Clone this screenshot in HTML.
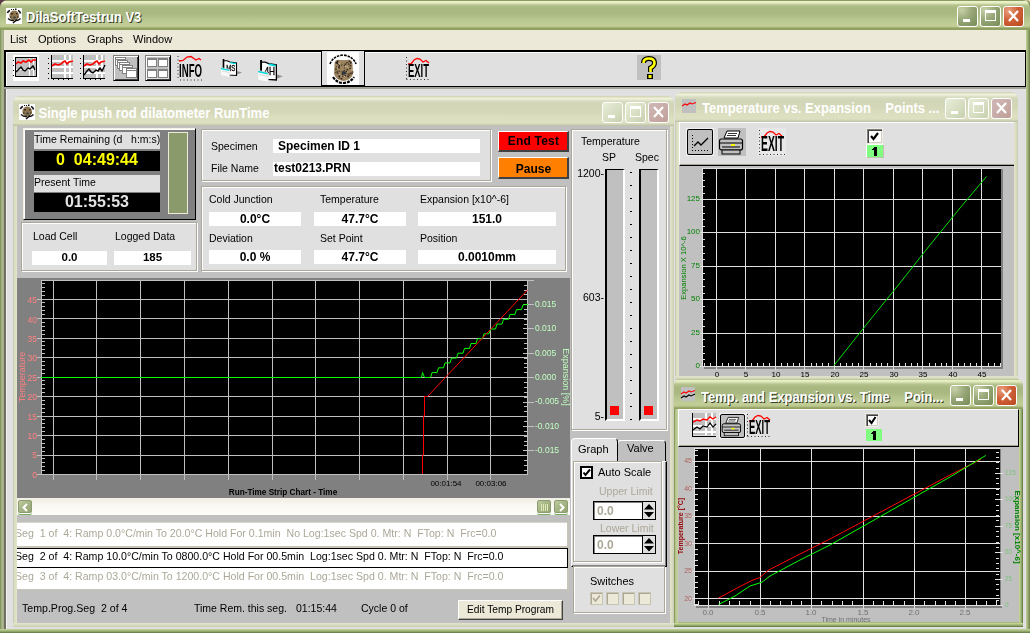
<!DOCTYPE html><html><head><meta charset="utf-8"><style>
*{margin:0;padding:0;box-sizing:border-box}
html,body{width:1030px;height:633px;overflow:hidden;background:linear-gradient(90deg,#5a3848 0,#5a3848 50%,#f8d4b4 50%)}
body{position:relative;font-family:"Liberation Sans",sans-serif;color:#000}
div{position:absolute}
.t{white-space:pre;will-change:transform}
svg{position:absolute;overflow:visible;will-change:transform}
</style></head><body><div style="left:0px;top:0px;width:1030px;height:633px;background:linear-gradient(90deg,#7a9060 0,#8ca068 1px,#b0c088 2px,#a8ac90 3px,#a8ac90 4px);border-radius:8px 8px 0 0"></div>
<div style="left:1026px;top:0px;width:4px;height:633px;background:linear-gradient(90deg,#c4d098 0,#b0c088 1px,#8ca068 2.5px,#6a8048 4px);border-radius:0 8px 0 0"></div>
<div style="left:0px;top:629px;width:1030px;height:4px;background:linear-gradient(180deg,#c8d498 0,#a8bc80 1.5px,#80985a 3px,#5a7040 4px)"></div>
<div style="left:0px;top:0px;width:1030px;height:30px;border-radius:8px 8px 0 0;background:linear-gradient(180deg,#8a9a60 0,#8a9a60 1px,#eef4cc 1px,#e4ecc0 3px,#b8c490 5px,#a8b880 8px,#aab882 14px,#b8c690 20px,#c2ce96 25px,#bcc890 27px,#90a060 28px,#90a060 30px)"></div>
<svg style="left:6px;top:8px" width="16" height="16" viewBox="0 0 16 16"><rect width="16" height="16" fill="#fff"/><path d="M1.5 5 Q2 3 4 2.5" stroke="#111" stroke-width="1.6" fill="none"/><path d="M12 2.5 Q14 3 14.5 5.5" stroke="#111" stroke-width="1.6" fill="none"/><rect x="5" y="1" width="1" height="1" fill="#111"/><rect x="7" y="1" width="1" height="1" fill="#111"/><rect x="9" y="0.5" width="1.5" height="1.5" fill="#111"/><ellipse cx="8.2" cy="7.5" rx="4.8" ry="5" fill="#8c7450"/><rect x="5" y="5" width="2" height="1.5" fill="#3a2a18"/><rect x="10" y="5" width="1.5" height="1.5" fill="#3a2a18"/><rect x="4" y="8" width="1.5" height="2" fill="#5a4a30"/><rect x="11" y="8" width="1.5" height="2" fill="#5a4a30"/><ellipse cx="8.5" cy="9.5" rx="1.3" ry="1" fill="#303840"/><path d="M2 10.5 Q5 13 8 12.5 M9 12.5 Q12 13 14.5 10.5" stroke="#111" stroke-width="1.5" fill="none"/><path d="M7 15 L11 11.5" stroke="#111" stroke-width="1.5"/></svg>
<div class="t" style="left:26px;top:11.00px;font-size:13px;line-height:13px;font-weight:bold;color:#fff;text-shadow:1px 1px 0 #38402a;transform:scaleY(1.1);transform-origin:0 11px;will-change:auto">DilaSoftTestrun V3</div>
<div style="left:957px;top:6px;width:21px;height:21px;border:1px solid #fff;border-radius:3px;background:radial-gradient(circle at 20% 15%,#c8d0a8 0,#98a878 45%,#788a58 100%)">
<div style="left:5px;top:12px;width:7px;height:3px;background:#fff"></div>
</div>
<div style="left:980px;top:6px;width:21px;height:21px;border:1px solid #fff;border-radius:3px;background:radial-gradient(circle at 20% 15%,#c8d0a8 0,#98a878 45%,#788a58 100%)">
<div style="left:4px;top:3px;width:11px;height:11px;border:1px solid #fff;border-top-width:3px"></div>
</div>
<div style="left:1003px;top:6px;width:21px;height:21px;border:1px solid #fff;border-radius:3px;background:radial-gradient(circle at 25% 20%,#e8a080 0,#d06038 45%,#b84820 100%)">
<svg style="left:0;top:0" width="19" height="19"><path d="M5 4 L14 14 M14 4 L5 14" stroke="#fff" stroke-width="2.2"/></svg>
</div>
<div style="left:4px;top:30px;width:1022px;height:20px;background:#ece9d8"></div>
<div class="t" style="left:9.5px;top:33.69px;font-size:11px;line-height:11px;">List</div>
<div class="t" style="left:37.5px;top:33.69px;font-size:11px;line-height:11px;">Options</div>
<div class="t" style="left:86.5px;top:33.69px;font-size:11px;line-height:11px;">Graphs</div>
<div class="t" style="left:133px;top:33.69px;font-size:11px;line-height:11px;">Window</div>
<div style="left:4px;top:50px;width:1022px;height:37px;background:#e0e0e0;border-top:2px solid #000;border-left:2px solid #000;border-right:1px solid #000;border-bottom:1px solid #000;box-shadow:inset 1px 1px 0 #fff"></div>
<div style="left:4px;top:87px;width:1021px;height:2px;background:#a4a498"></div>
<div style="left:4px;top:89px;width:1022px;height:540px;background:#e0e0e0;border-left:2px solid #706e60;box-shadow:inset 1px 0 0 #f4f4f4"></div>
<svg style="left:13px;top:55px" width="26" height="26" shape-rendering="crispEdges"><rect width="26" height="26" fill="#fff"/><rect x="2" y="2" width="22" height="20" fill="#000"/><rect x="3" y="3" width="20" height="18" fill="#c0c0c0"/><rect x="3" y="14" width="20" height="1" fill="#fff"/><rect x="16" y="3" width="1" height="18" fill="#fff"/><rect x="20" y="3" width="1" height="18" fill="#fff"/><path d="M3 9 L5 7 L8 8 L10 6 L13 7 L16 5 L18 7 L20 5 L23 5" stroke="#f00" stroke-width="1.6" fill="none" shape-rendering="auto"/><path d="M3 17 L6 14 L8 12 L10 15 L12 16 L15 13 L17 14 L20 11 L22 15" stroke="#000" stroke-width="1.4" fill="none" shape-rendering="auto"/><rect x="0" y="5" width="1" height="1" fill="#000"/><rect x="0" y="10" width="1" height="1" fill="#000"/><rect x="0" y="15" width="1" height="1" fill="#000"/><rect x="0" y="20" width="1" height="1" fill="#000"/></svg>
<svg style="left:48px;top:55px" width="26" height="26" shape-rendering="crispEdges"><rect x="3" y="0" width="22" height="23" fill="#c0c0c0"/><rect x="3" y="5" width="22" height="2" fill="#fff"/><rect x="3" y="11" width="22" height="2" fill="#fff"/><rect x="3" y="17" width="22" height="2" fill="#fff"/><rect x="16" y="0" width="2" height="23" fill="#fff"/><rect x="21" y="0" width="2" height="23" fill="#fff"/><rect x="3" y="0" width="1" height="24" fill="#000"/><rect x="3" y="23" width="22" height="1" fill="#000"/><rect x="0" y="3" width="1" height="1" fill="#000"/><rect x="0" y="8" width="1" height="1" fill="#000"/><rect x="0" y="13" width="1" height="1" fill="#000"/><rect x="0" y="18" width="1" height="1" fill="#000"/><rect x="0" y="23" width="1" height="1" fill="#000"/><rect x="5" y="24" width="1" height="1" fill="#000"/><rect x="10" y="24" width="1" height="1" fill="#000"/><rect x="15" y="24" width="1" height="1" fill="#000"/><rect x="20" y="24" width="1" height="1" fill="#000"/><path d="M4 11 L7 9 L10 10 L13 9 L15 7 L17 6 L19 9 L21 7 L25 6" stroke="#f00" stroke-width="1.6" fill="none" shape-rendering="auto"/></svg>
<svg style="left:80px;top:55px" width="26" height="26" shape-rendering="crispEdges"><rect x="3" y="0" width="22" height="23" fill="#c0c0c0"/><rect x="3" y="5" width="22" height="2" fill="#fff"/><rect x="3" y="11" width="22" height="2" fill="#fff"/><rect x="3" y="17" width="22" height="2" fill="#fff"/><rect x="16" y="0" width="2" height="23" fill="#fff"/><rect x="21" y="0" width="2" height="23" fill="#fff"/><rect x="3" y="0" width="1" height="24" fill="#000"/><rect x="3" y="23" width="22" height="1" fill="#000"/><rect x="0" y="3" width="1" height="1" fill="#000"/><rect x="0" y="8" width="1" height="1" fill="#000"/><rect x="0" y="13" width="1" height="1" fill="#000"/><rect x="0" y="18" width="1" height="1" fill="#000"/><rect x="0" y="23" width="1" height="1" fill="#000"/><rect x="5" y="24" width="1" height="1" fill="#000"/><rect x="10" y="24" width="1" height="1" fill="#000"/><rect x="15" y="24" width="1" height="1" fill="#000"/><rect x="20" y="24" width="1" height="1" fill="#000"/><path d="M4 11 L7 9 L10 10 L13 9 L15 7 L17 6 L19 9 L21 7 L25 6" stroke="#f00" stroke-width="1.6" fill="none" shape-rendering="auto"/><path d="M4 20 L7 16 L9 14 L11 17 L13 18 L16 15 L18 16 L20 13 L22 16 L25 10" stroke="#000" stroke-width="1.4" fill="none" shape-rendering="auto"/></svg>
<div style="left:113px;top:55px;width:26px;height:26px;background:#c0c0c0;border-top:1px solid #808080;border-left:1px solid #808080;border-right:1px solid #000;border-bottom:1px solid #000;box-shadow:inset 1px 1px 0 #fff, inset -1px -1px 0 #404040"></div>
<svg style="left:113px;top:55px" width="26" height="26" shape-rendering="crispEdges"><rect x="2.5" y="2.5" width="10" height="8" fill="#fff" stroke="#808080"/><rect x="3.0" y="4.0" width="9" height="1" fill="#808080"/><rect x="4.5" y="5" width="10" height="8" fill="#fff" stroke="#808080"/><rect x="5.0" y="6.5" width="9" height="1" fill="#808080"/><rect x="6" y="7" width="10" height="8" fill="#fff" stroke="#808080"/><rect x="6.5" y="8.5" width="9" height="1" fill="#808080"/><rect x="9" y="10" width="10" height="8" fill="#fff" stroke="#808080"/><rect x="9.5" y="11.5" width="9" height="1" fill="#808080"/><rect x="13.5" y="13.5" width="10" height="9" fill="#fff" stroke="#808080"/><rect x="14.0" y="15.0" width="9" height="1" fill="#808080"/></svg>
<div style="left:145px;top:55px;width:26px;height:26px;background:#e0e0e0;border-top:1px solid #808080;border-left:1px solid #808080;border-right:1px solid #000;border-bottom:1px solid #000;box-shadow:inset 1px 1px 0 #fff, inset -1px -1px 0 #404040"></div>
<svg style="left:145px;top:55px" width="26" height="26" shape-rendering="crispEdges"><rect x="2" y="2" width="21" height="21" fill="#c0c0c0"/><rect x="2.5" y="3.5" width="9" height="8" fill="#fff" stroke="#808080"/><rect x="3" y="4" width="8" height="1" fill="#808080"/><rect x="13.5" y="3.5" width="9" height="8" fill="#fff" stroke="#808080"/><rect x="14" y="4" width="8" height="1" fill="#808080"/><rect x="2.5" y="14.5" width="9" height="8" fill="#fff" stroke="#808080"/><rect x="3" y="15" width="8" height="1" fill="#808080"/><rect x="13.5" y="14.5" width="9" height="8" fill="#fff" stroke="#808080"/><rect x="14" y="15" width="8" height="1" fill="#808080"/></svg>
<svg style="left:177px;top:55px" width="26" height="26"><path d="M2 6 L6 5.5 L10 2 L14 1.5 L19 5 L22 3.5 L24 5" stroke="#f00" stroke-width="1.3" fill="none"/><path d="M1 1 V25 M3 25 H25" stroke="#000" stroke-width="0.8" stroke-dasharray="1 2.5" fill="none"/><text x="13.5" y="21.5" text-anchor="middle" font-family="Liberation Sans" font-weight="bold" font-size="19" textLength="23" lengthAdjust="spacingAndGlyphs" fill="#000">INFO</text></svg>
<svg style="left:220px;top:59px" width="23" height="19" viewBox="0 0 23 19" preserveAspectRatio="none"><path d="M17 12 L22 13.5 L17 15.5 Z" fill="#909090"/><path d="M3.5 0.5 L3.5 1.5 L7 1.8 L10 3 L16.5 4 L16.5 16.5 L9 16 L8 15.5 L3.5 14 Z" fill="#fff" stroke="#000" stroke-width="1.1"/><path d="M3.5 0 V9" stroke="#000" stroke-width="1.6"/><path d="M10 3.6 L16 4.6" stroke="#00d8e0" stroke-width="1.4"/><text x="10.8" y="12.3" text-anchor="middle" font-family="Liberation Sans" font-size="8.5" textLength="9" lengthAdjust="spacingAndGlyphs" fill="#000" stroke="#000" stroke-width="0.3">MS</text><path d="M0.5 8.5 L9.5 10.5 L9.5 18.5 L0.5 16.5 Z" fill="#f8f8f8" stroke="#d8d8d8" stroke-width="0.6"/><path d="M1 9.5 L9 11.3" stroke="#00d8e0" stroke-width="1.3"/><path d="M2 12 L9 13.5" stroke="#c8c8c8" stroke-width="0.6"/></svg>
<svg style="left:257px;top:60px" width="27" height="23" viewBox="0 0 23 19" preserveAspectRatio="none"><path d="M17 12 L22 13.5 L17 15.5 Z" fill="#909090"/><path d="M3.5 0.5 L3.5 1.5 L7 1.8 L10 3 L16.5 4 L16.5 16.5 L9 16 L8 15.5 L3.5 14 Z" fill="#fff" stroke="#000" stroke-width="1.1"/><path d="M3.5 0 V9" stroke="#000" stroke-width="1.6"/><path d="M10 3.6 L16 4.6" stroke="#00d8e0" stroke-width="1.4"/><text x="10.8" y="12.3" text-anchor="middle" font-family="Liberation Sans" font-size="8.5" textLength="9" lengthAdjust="spacingAndGlyphs" fill="#000" stroke="#000" stroke-width="0.3">4H</text><path d="M0.5 8.5 L9.5 10.5 L9.5 18.5 L0.5 16.5 Z" fill="#f8f8f8" stroke="#d8d8d8" stroke-width="0.6"/><path d="M1 9.5 L9 11.3" stroke="#00d8e0" stroke-width="1.3"/><path d="M2 12 L9 13.5" stroke="#c8c8c8" stroke-width="0.6"/></svg>
<div style="left:321px;top:51px;width:44px;height:35px;background:#e0e0e0;border-left:1px solid #000;border-right:1.5px solid #000;border-bottom:1px solid #000"></div>
<div style="left:327px;top:52px;width:32px;height:33px;background:#fff"></div>
<svg style="left:327px;top:52px" width="32" height="33"><path d="M3 12 Q6 4 16 3 Q26 4 29 12" stroke="#000" stroke-width="1.6" fill="none" stroke-dasharray="2.5 1"/><path d="M7.5 12 Q8 7 13 8 L20 8 Q25 7 25.5 12 L26 22 Q24 28 16.5 29 Q9 28 7 22 Z" fill="#9c8460"/><path d="M8 11 L11 8 L12 13 Z M22 8 L25 11 L21 13 Z" fill="#2a2018"/><rect x="14.9" y="21.3" width="1.3" height="1.3" fill="#2a2018"/><rect x="24.3" y="20.6" width="1.3" height="1.3" fill="#2a2018"/><rect x="15.1" y="19.7" width="1.3" height="1.3" fill="#6a5838"/><rect x="17.1" y="20.7" width="1.3" height="1.3" fill="#c8b090"/><rect x="19.0" y="19.2" width="1.3" height="1.3" fill="#c8b090"/><rect x="22.8" y="20.6" width="1.3" height="1.3" fill="#3a2a18"/><rect x="11.8" y="12.7" width="1.3" height="1.3" fill="#2a2018"/><rect x="11.5" y="15.2" width="1.3" height="1.3" fill="#3a2a18"/><rect x="24.5" y="20.5" width="1.3" height="1.3" fill="#5a4a30"/><rect x="10.7" y="21.4" width="1.3" height="1.3" fill="#6a5838"/><rect x="13.6" y="26.0" width="1.3" height="1.3" fill="#3a2a18"/><rect x="21.9" y="22.3" width="1.3" height="1.3" fill="#3a2a18"/><rect x="11.9" y="23.0" width="1.3" height="1.3" fill="#2a2018"/><rect x="10.0" y="15.1" width="1.3" height="1.3" fill="#c8b090"/><rect x="14.0" y="12.4" width="1.3" height="1.3" fill="#5a4a30"/><rect x="8.1" y="19.9" width="1.3" height="1.3" fill="#5a4a30"/><rect x="14.0" y="26.0" width="1.3" height="1.3" fill="#2a2018"/><rect x="17.0" y="15.3" width="1.3" height="1.3" fill="#5a4a30"/><rect x="8.2" y="16.6" width="1.3" height="1.3" fill="#2a2018"/><rect x="9.8" y="20.3" width="1.3" height="1.3" fill="#2a2018"/><rect x="20.8" y="22.1" width="1.3" height="1.3" fill="#5a4a30"/><rect x="20.1" y="23.4" width="1.3" height="1.3" fill="#2a2018"/><rect x="18.9" y="17.4" width="1.3" height="1.3" fill="#6a5838"/><rect x="8.9" y="14.1" width="1.3" height="1.3" fill="#5a4a30"/><rect x="13.6" y="22.7" width="1.3" height="1.3" fill="#c8b090"/><rect x="11.2" y="14.9" width="1.3" height="1.3" fill="#2a2018"/><rect x="22.3" y="15.8" width="1.3" height="1.3" fill="#2a2018"/><rect x="23.6" y="21.2" width="1.3" height="1.3" fill="#5a4a30"/><rect x="11.1" y="10.5" width="1.3" height="1.3" fill="#c8b090"/><rect x="15.3" y="23.7" width="1.3" height="1.3" fill="#2a2018"/><rect x="11.5" y="25.5" width="1.3" height="1.3" fill="#5a4a30"/><rect x="18.0" y="20.8" width="1.3" height="1.3" fill="#2a2018"/><rect x="17.5" y="23.0" width="1.3" height="1.3" fill="#2a2018"/><rect x="16.6" y="23.9" width="1.3" height="1.3" fill="#c8b090"/><rect x="21.8" y="21.1" width="1.3" height="1.3" fill="#6a5838"/><rect x="15.9" y="21.4" width="1.3" height="1.3" fill="#c8b090"/><rect x="19.6" y="14.2" width="1.3" height="1.3" fill="#c8b090"/><rect x="23.9" y="17.3" width="1.3" height="1.3" fill="#c8b090"/><rect x="19.9" y="17.0" width="1.3" height="1.3" fill="#3a2a18"/><rect x="20.7" y="24.2" width="1.3" height="1.3" fill="#2a2018"/><rect x="9.6" y="18.7" width="1.3" height="1.3" fill="#5a4a30"/><rect x="15.8" y="21.5" width="1.3" height="1.3" fill="#6a5838"/><rect x="11.9" y="23.2" width="1.3" height="1.3" fill="#3a2a18"/><rect x="14.1" y="11.7" width="1.3" height="1.3" fill="#6a5838"/><rect x="12.1" y="11.3" width="1.3" height="1.3" fill="#c8b090"/><rect x="22.9" y="13.1" width="1.3" height="1.3" fill="#2a2018"/><rect x="18.2" y="12.3" width="1.3" height="1.3" fill="#c8b090"/><rect x="11.6" y="22.0" width="1.3" height="1.3" fill="#c8b090"/><rect x="18.7" y="18.9" width="1.3" height="1.3" fill="#3a2a18"/><rect x="13.7" y="19.1" width="1.3" height="1.3" fill="#6a5838"/><rect x="16.6" y="18.0" width="1.3" height="1.3" fill="#3a2a18"/><rect x="8.0" y="15.9" width="1.3" height="1.3" fill="#6a5838"/><rect x="24.8" y="19.4" width="1.3" height="1.3" fill="#6a5838"/><rect x="11.4" y="23.3" width="1.3" height="1.3" fill="#5a4a30"/><rect x="11.5" y="14.1" width="1.3" height="1.3" fill="#2a2018"/><rect x="21.7" y="10.3" width="1.3" height="1.3" fill="#c8b090"/><rect x="11.5" y="18.6" width="1.3" height="1.3" fill="#3a2a18"/><rect x="20.7" y="21.3" width="1.3" height="1.3" fill="#5a4a30"/><rect x="9.1" y="19.1" width="1.3" height="1.3" fill="#6a5838"/><rect x="25.2" y="19.3" width="1.3" height="1.3" fill="#6a5838"/><rect x="11.7" y="24.0" width="1.3" height="1.3" fill="#2a2018"/><rect x="16.8" y="12.8" width="1.3" height="1.3" fill="#2a2018"/><rect x="21.4" y="12.0" width="1.3" height="1.3" fill="#5a4a30"/><rect x="8.0" y="17.0" width="1.3" height="1.3" fill="#5a4a30"/><rect x="17.4" y="11.2" width="1.3" height="1.3" fill="#6a5838"/><rect x="14.5" y="21.9" width="1.3" height="1.3" fill="#3a2a18"/><rect x="19.3" y="10.0" width="1.3" height="1.3" fill="#2a2018"/><rect x="17.8" y="14.0" width="1.3" height="1.3" fill="#c8b090"/><rect x="15.6" y="19.3" width="1.3" height="1.3" fill="#2a2018"/><rect x="18.0" y="11.7" width="1.3" height="1.3" fill="#3a2a18"/><ellipse cx="17" cy="21" rx="2.3" ry="1.8" fill="#303840"/><path d="M6 25 Q10 31 16 31 Q23 31 27 25" stroke="#000" stroke-width="2.2" fill="none" stroke-dasharray="3 1"/></svg>
<svg style="left:405px;top:55px" width="26" height="26"><rect x="0" y="0" width="26" height="26" fill="#e0e0e0"/><path d="M3 9 L6 9 L9 5 L12 3.5 L15 4 L18 7 L21 5.5 L24 8" stroke="#ff0000" stroke-width="1.3" fill="none"/><path d="M1.5 2 V 25 M1.5 24.5 H25" stroke="#000" stroke-width="0.8" stroke-dasharray="1 2.5" fill="none"/><text x="13.5" y="21.8" text-anchor="middle" font-family="Liberation Sans" font-weight="bold" font-size="19.2" textLength="21" lengthAdjust="spacingAndGlyphs" fill="#000">EXIT</text></svg>
<div style="left:637px;top:55px;width:24px;height:25px;background:#c0c0c0"></div>
<svg style="left:637px;top:55px" width="24" height="25"><path d="M6.5 8 Q6.5 3.5 12 3.5 Q17.5 3.5 17.5 8 Q17.5 11 13.5 13 L13.5 17" stroke="#000" stroke-width="5" fill="none"/><path d="M6.5 8 Q6.5 3.5 12 3.5 Q17.5 3.5 17.5 8 Q17.5 11 13.5 13 L13.5 17" stroke="#ffff00" stroke-width="2.6" fill="none"/><rect x="10" y="19" width="6" height="5" fill="#000"/><rect x="11.5" y="20" width="3" height="3" fill="#ffff00"/><rect x="11" y="7" width="2" height="2" fill="#c0c0c0"/></svg>
<div style="left:13px;top:96px;width:661px;height:531px;background:#dcdec4;border-radius:7px 7px 0 0"></div>
<div style="left:13px;top:96px;width:661px;height:30px;background:linear-gradient(180deg,#d4d8b8 0,#d4d8b8 1px,#f0f2dc 2px,#eef0d8 3px,#d8dcc0 5px,#d2d6b8 8px,#d4d8b8 16px,#dcdec0 22px,#dee0c2 27px,#c8ccb0 29px,#b8bca0 30px);border-radius:7px 7px 0 0"></div>
<div style="left:13px;top:126px;width:1px;height:501px;background:#c8ccb0"></div>
<div style="left:14px;top:126px;width:3px;height:501px;background:linear-gradient(90deg,#d8dcc0,#e4e4cc)"></div>
<div style="left:670px;top:126px;width:4px;height:501px;background:linear-gradient(90deg,#e4e4cc,#d8dcc0 2px,#c8ccb0)"></div>
<div style="left:13px;top:623px;width:661px;height:4px;background:linear-gradient(180deg,#e4e4cc,#d8dcc0 2px,#c8ccb0)"></div>
<div class="t" style="left:38.5px;top:107.00px;font-size:13px;line-height:13px;font-weight:bold;color:#ffffff;transform:scaleY(1.1);transform-origin:0 11px;will-change:auto">Single push rod dilatometer RunTime</div>
<div style="left:602px;top:102px;width:21px;height:21px;border:1px solid #fff;border-radius:3px;background:linear-gradient(135deg,#e8eed8 0,#c8d0b0 100%)">
<div style="left:5px;top:12px;width:7px;height:3px;background:#fff"></div>
</div>
<div style="left:625px;top:102px;width:21px;height:21px;border:1px solid #fff;border-radius:3px;background:linear-gradient(135deg,#e8eed8 0,#c8d0b0 100%)">
<div style="left:4px;top:3px;width:11px;height:11px;border:1px solid #fff;border-top-width:3px"></div>
</div>
<div style="left:648px;top:102px;width:21px;height:21px;border:1px solid #fff;border-radius:3px;background:linear-gradient(135deg,#d0b8b8 0,#c0a098 100%)">
<svg style="left:0;top:0" width="19" height="19"><path d="M5 4 L14 14 M14 4 L5 14" stroke="#fff" stroke-width="2.2"/></svg>
</div>
<svg style="left:19px;top:104px" width="16" height="16" viewBox="0 0 16 16"><rect width="16" height="16" fill="#fff"/><path d="M1.5 5 Q2 3 4 2.5" stroke="#111" stroke-width="1.6" fill="none"/><path d="M12 2.5 Q14 3 14.5 5.5" stroke="#111" stroke-width="1.6" fill="none"/><rect x="5" y="1" width="1" height="1" fill="#111"/><rect x="7" y="1" width="1" height="1" fill="#111"/><rect x="9" y="0.5" width="1.5" height="1.5" fill="#111"/><ellipse cx="8.2" cy="7.5" rx="4.8" ry="5" fill="#8c7450"/><rect x="5" y="5" width="2" height="1.5" fill="#3a2a18"/><rect x="10" y="5" width="1.5" height="1.5" fill="#3a2a18"/><rect x="4" y="8" width="1.5" height="2" fill="#5a4a30"/><rect x="11" y="8" width="1.5" height="2" fill="#5a4a30"/><ellipse cx="8.5" cy="9.5" rx="1.3" ry="1" fill="#303840"/><path d="M2 10.5 Q5 13 8 12.5 M9 12.5 Q12 13 14.5 10.5" stroke="#111" stroke-width="1.5" fill="none"/><path d="M7 15 L11 11.5" stroke="#111" stroke-width="1.5"/></svg>
<div style="left:675px;top:92px;width:343px;height:288px;background:#dcdec4;border-radius:7px 7px 0 0"></div>
<div style="left:675px;top:92px;width:343px;height:30px;background:linear-gradient(180deg,#d4d8b8 0,#d4d8b8 1px,#f0f2dc 2px,#eef0d8 3px,#d8dcc0 5px,#d2d6b8 8px,#d4d8b8 16px,#dcdec0 22px,#dee0c2 27px,#c8ccb0 29px,#b8bca0 30px);border-radius:7px 7px 0 0"></div>
<div style="left:675px;top:122px;width:1px;height:258px;background:#c8ccb0"></div>
<div style="left:676px;top:122px;width:3px;height:258px;background:linear-gradient(90deg,#d8dcc0,#e4e4cc)"></div>
<div style="left:1014px;top:122px;width:4px;height:258px;background:linear-gradient(90deg,#e4e4cc,#d8dcc0 2px,#c8ccb0)"></div>
<div style="left:675px;top:376px;width:343px;height:4px;background:linear-gradient(180deg,#e4e4cc,#d8dcc0 2px,#c8ccb0)"></div>
<div class="t" style="left:702px;top:101.70px;font-size:13px;line-height:13px;font-weight:bold;color:#ffffff;transform:scaleY(1.1);transform-origin:0 11px;will-change:auto">Temperature vs. Expansion    Points ...</div>
<div style="left:945px;top:98px;width:21px;height:21px;border:1px solid #fff;border-radius:3px;background:linear-gradient(135deg,#e8eed8 0,#c8d0b0 100%)">
<div style="left:5px;top:12px;width:7px;height:3px;background:#fff"></div>
</div>
<div style="left:968px;top:98px;width:21px;height:21px;border:1px solid #fff;border-radius:3px;background:linear-gradient(135deg,#e8eed8 0,#c8d0b0 100%)">
<div style="left:4px;top:3px;width:11px;height:11px;border:1px solid #fff;border-top-width:3px"></div>
</div>
<div style="left:991px;top:98px;width:21px;height:21px;border:1px solid #fff;border-radius:3px;background:linear-gradient(135deg,#d0b8b8 0,#c0a098 100%)">
<svg style="left:0;top:0" width="19" height="19"><path d="M5 4 L14 14 M14 4 L5 14" stroke="#fff" stroke-width="2.2"/></svg>
</div>
<svg style="left:682px;top:99px" width="14" height="14"><rect width="14" height="14" fill="#c0c0c0"/><path d="M0 7 L3 5 L5 6 L8 4 L10 5 L14 3.5" stroke="#f00" stroke-width="1.1" fill="none"/></svg>
<div style="left:674px;top:379px;width:349px;height:248px;background:#a8b880;border-radius:7px 7px 0 0"></div>
<div style="left:674px;top:379px;width:349px;height:30px;background:linear-gradient(180deg,#8a9a60 0,#eef4cc 1px,#dce6b8 3px,#b8c490 5px,#a8b880 8px,#aab882 14px,#b8c690 20px,#c2ce96 25px,#bcc890 27px,#90a060 29px,#90a060 30px);border-radius:7px 7px 0 0"></div>
<div style="left:674px;top:409px;width:1px;height:218px;background:#8a9a60"></div>
<div style="left:675px;top:409px;width:3px;height:218px;background:linear-gradient(90deg,#b0c088,#c8d4a0)"></div>
<div style="left:1019px;top:409px;width:4px;height:218px;background:linear-gradient(90deg,#d0dca0 0,#b8c888 1px,#90a868 2.5px,#5a7040 4px)"></div>
<div style="left:674px;top:623px;width:349px;height:4px;background:linear-gradient(180deg,#d0dca0 0,#b8c888 1px,#90a868 2.5px,#5a7040 4px)"></div>
<div class="t" style="left:701px;top:390.50px;font-size:13px;line-height:13px;font-weight:bold;color:#fff;text-shadow:1px 1px 0 #38402a;transform:scaleY(1.1);transform-origin:0 11px;will-change:auto">Temp. and Expansion vs. Time    Poin...</div>
<div style="left:950px;top:385px;width:21px;height:21px;border:1px solid #fff;border-radius:3px;background:radial-gradient(circle at 20% 15%,#c8d0a8 0,#98a878 45%,#788a58 100%)">
<div style="left:5px;top:12px;width:7px;height:3px;background:#fff"></div>
</div>
<div style="left:973px;top:385px;width:21px;height:21px;border:1px solid #fff;border-radius:3px;background:radial-gradient(circle at 20% 15%,#c8d0a8 0,#98a878 45%,#788a58 100%)">
<div style="left:4px;top:3px;width:11px;height:11px;border:1px solid #fff;border-top-width:3px"></div>
</div>
<div style="left:996px;top:385px;width:21px;height:21px;border:1px solid #fff;border-radius:3px;background:radial-gradient(circle at 25% 20%,#e8a080 0,#d06038 45%,#b84820 100%)">
<svg style="left:0;top:0" width="19" height="19"><path d="M5 4 L14 14 M14 4 L5 14" stroke="#fff" stroke-width="2.2"/></svg>
</div>
<svg style="left:681px;top:387px" width="14" height="14"><rect width="14" height="14" fill="#c0c0c0"/><path d="M0 7 L3 5 L5 6 L8 4 L10 5 L14 3.5" stroke="#f00" stroke-width="1.1" fill="none"/><path d="M0 11 L3 9 L5 10 L8 8 L10 9 L14 7" stroke="#000" stroke-width="1.1" fill="none"/></svg>
<div style="left:17px;top:126px;width:653px;height:497px;background:#c0c0c0"></div>
<div style="left:23px;top:128px;width:173px;height:92px;background:#808080;border-top:1px solid #f4f2e4;border-left:1px solid #f4f2e4;border-right:1px solid #000;border-bottom:1px solid #000;box-shadow:inset 1px 1px 0 #fff"></div>
<div style="left:34px;top:132px;width:126px;height:17px;background:#e0e0e0"></div>
<div class="t" style="left:34px;top:134.11px;font-size:10.5px;line-height:10.5px;">Time Remaining (d   h:m:s)</div>
<div style="left:34px;top:151px;width:126px;height:20px;background:#000"></div>
<div class="t" style="left:34.00px;top:152.46px;width:126px;text-align:center;font-size:16px;line-height:16px;font-weight:bold;color:#ffff00">0  04:49:44</div>
<div style="left:34px;top:175px;width:126px;height:17px;background:#e0e0e0"></div>
<div class="t" style="left:34px;top:177.11px;font-size:10.5px;line-height:10.5px;">Present Time</div>
<div style="left:34px;top:193px;width:126px;height:19px;background:#000"></div>
<div class="t" style="left:34.00px;top:194.46px;width:126px;text-align:center;font-size:16px;line-height:16px;font-weight:bold;color:#e4e4e4">01:55:53</div>
<div style="left:168px;top:132px;width:20px;height:82px;background:#8a9a6a;border:1px solid #ecead8"></div>
<div style="left:21px;top:222px;width:176px;height:49px;background:#e0e0e0;border:1px solid #aca899;box-shadow:inset 1px 1px 0 #fff, 1px 1px 0 #fff"></div>
<div class="t" style="left:32.5px;top:231.11px;font-size:10.5px;line-height:10.5px;">Load Cell</div>
<div class="t" style="left:114.5px;top:231.11px;font-size:10.5px;line-height:10.5px;">Logged Data</div>
<div style="left:32px;top:251px;width:75px;height:14px;background:#fff"></div>
<div style="left:114px;top:251px;width:77px;height:14px;background:#fff"></div>
<div class="t" style="left:32.00px;top:252.27px;width:75px;text-align:center;font-size:11.5px;line-height:11.5px;font-weight:bold;">0.0</div>
<div class="t" style="left:114.00px;top:252.27px;width:77px;text-align:center;font-size:11.5px;line-height:11.5px;font-weight:bold;">185</div>
<div style="left:201px;top:129px;width:290px;height:52px;background:#e0e0e0;border:1px solid #aca899;box-shadow:inset 1px 1px 0 #fff, 1px 1px 0 #fff"></div>
<div class="t" style="left:211px;top:141.11px;font-size:10.5px;line-height:10.5px;">Specimen</div>
<div class="t" style="left:211px;top:163.11px;font-size:10.5px;line-height:10.5px;">File Name</div>
<div style="left:273px;top:139px;width:207px;height:14px;background:#fff"></div>
<div style="left:273px;top:162px;width:207px;height:14px;background:#fff"></div>
<div class="t" style="left:278px;top:139.84px;font-size:12px;line-height:12px;font-weight:bold;">Specimen ID 1</div>
<div class="t" style="left:274px;top:161.84px;font-size:12px;line-height:12px;font-weight:bold;">test0213.PRN</div>
<div style="left:498px;top:131px;width:71px;height:21px;background:#ff0000;border-top:1px solid #fff;border-left:1px solid #fff;border-right:2px solid #404040;border-bottom:2px solid #404040"></div>
<div class="t" style="left:497.50px;top:135.14px;width:71px;text-align:center;font-size:12px;line-height:12px;font-weight:bold;letter-spacing:0.2px">End Test</div>
<div style="left:498px;top:157px;width:71px;height:22px;background:#ff8000;border-top:1px solid #fff;border-left:1px solid #fff;border-right:2px solid #404040;border-bottom:2px solid #404040"></div>
<div class="t" style="left:497.50px;top:162.84px;width:71px;text-align:center;font-size:12px;line-height:12px;font-weight:bold;">Pause</div>
<div style="left:201px;top:186px;width:365px;height:85px;background:#e0e0e0;border:1px solid #aca899;box-shadow:inset 1px 1px 0 #fff, 1px 1px 0 #fff"></div>
<div class="t" style="left:209px;top:194.11px;font-size:10.5px;line-height:10.5px;">Cold Junction</div>
<div class="t" style="left:209px;top:233.11px;font-size:10.5px;line-height:10.5px;">Deviation</div>
<div style="left:209px;top:212px;width:92px;height:14px;background:#fff"></div>
<div style="left:209px;top:250px;width:92px;height:14px;background:#fff"></div>
<div class="t" style="left:209.00px;top:212.84px;width:92px;text-align:center;font-size:12px;line-height:12px;font-weight:bold;">0.0°C</div>
<div class="t" style="left:209.00px;top:250.84px;width:92px;text-align:center;font-size:12px;line-height:12px;font-weight:bold;">0.0 %</div>
<div class="t" style="left:320px;top:194.11px;font-size:10.5px;line-height:10.5px;">Temperature</div>
<div class="t" style="left:320px;top:233.11px;font-size:10.5px;line-height:10.5px;">Set Point</div>
<div style="left:314px;top:212px;width:92px;height:14px;background:#fff"></div>
<div style="left:314px;top:250px;width:92px;height:14px;background:#fff"></div>
<div class="t" style="left:314.00px;top:212.84px;width:92px;text-align:center;font-size:12px;line-height:12px;font-weight:bold;">47.7°C</div>
<div class="t" style="left:314.00px;top:250.84px;width:92px;text-align:center;font-size:12px;line-height:12px;font-weight:bold;">47.7°C</div>
<div class="t" style="left:419.5px;top:194.11px;font-size:10.5px;line-height:10.5px;">Expansion [x10^-6]</div>
<div class="t" style="left:419.5px;top:233.11px;font-size:10.5px;line-height:10.5px;">Position</div>
<div style="left:418px;top:212px;width:138px;height:14px;background:#fff"></div>
<div style="left:418px;top:250px;width:138px;height:14px;background:#fff"></div>
<div class="t" style="left:418.00px;top:212.84px;width:138px;text-align:center;font-size:12px;line-height:12px;font-weight:bold;">151.0</div>
<div class="t" style="left:418.00px;top:250.84px;width:138px;text-align:center;font-size:12px;line-height:12px;font-weight:bold;">0.0010mm</div>
<div style="left:571px;top:129px;width:96px;height:301px;background:#e0e0e0;border:1px solid #aca899;box-shadow:inset 1px 1px 0 #fff, 1px 1px 0 #fff"></div>
<div class="t" style="left:580.5px;top:136.41px;font-size:10.5px;line-height:10.5px;">Temperature</div>
<div class="t" style="left:601.5px;top:151.91px;font-size:10.5px;line-height:10.5px;">SP</div>
<div class="t" style="left:634.5px;top:151.91px;font-size:10.5px;line-height:10.5px;">Spec</div>
<div class="t" style="left:564.00px;top:168.11px;width:40px;text-align:right;font-size:10.5px;line-height:10.5px;">1200-</div>
<div class="t" style="left:564.00px;top:291.91px;width:40px;text-align:right;font-size:10.5px;line-height:10.5px;">603-</div>
<div class="t" style="left:564.00px;top:411.41px;width:40px;text-align:right;font-size:10.5px;line-height:10.5px;">5-</div>
<div style="left:605px;top:169px;width:20px;height:252px;background:#c0c0c0;border-left:2px solid #000;border-top:1px solid #000;border-right:2px solid #fff;border-bottom:2px solid #fff"></div>
<div style="left:639px;top:169px;width:20px;height:252px;background:#c0c0c0;border-left:2px solid #000;border-top:1px solid #000;border-right:2px solid #fff;border-bottom:2px solid #fff"></div>
<div style="left:610px;top:406px;width:9px;height:9px;background:#ff0000"></div>
<div style="left:644px;top:406px;width:9px;height:9px;background:#ff0000"></div>
<div style="left:630px;top:172px;width:2px;height:1px;background:#000"></div>
<div style="left:630px;top:185px;width:2px;height:1px;background:#000"></div>
<div style="left:630px;top:198px;width:2px;height:1px;background:#000"></div>
<div style="left:630px;top:211px;width:2px;height:1px;background:#000"></div>
<div style="left:630px;top:224px;width:2px;height:1px;background:#000"></div>
<div style="left:630px;top:237px;width:2px;height:1px;background:#000"></div>
<div style="left:630px;top:250px;width:2px;height:1px;background:#000"></div>
<div style="left:630px;top:263px;width:2px;height:1px;background:#000"></div>
<div style="left:630px;top:276px;width:2px;height:1px;background:#000"></div>
<div style="left:630px;top:289px;width:2px;height:1px;background:#000"></div>
<div style="left:630px;top:302px;width:2px;height:1px;background:#000"></div>
<div style="left:630px;top:315px;width:2px;height:1px;background:#000"></div>
<div style="left:630px;top:328px;width:2px;height:1px;background:#000"></div>
<div style="left:630px;top:341px;width:2px;height:1px;background:#000"></div>
<div style="left:630px;top:354px;width:2px;height:1px;background:#000"></div>
<div style="left:630px;top:367px;width:2px;height:1px;background:#000"></div>
<div style="left:630px;top:380px;width:2px;height:1px;background:#000"></div>
<div style="left:630px;top:393px;width:2px;height:1px;background:#000"></div>
<div style="left:630px;top:406px;width:2px;height:1px;background:#000"></div>
<div style="left:630px;top:419px;width:2px;height:1px;background:#000"></div>
<div style="left:17px;top:278px;width:553px;height:220px;background:#808080"></div>
<svg style="left:0;top:0" width="1030" height="633" shape-rendering="crispEdges"><rect x="41" y="280" width="487" height="195" fill="#000"/><rect x="41" y="280" width="487" height="1" fill="#c0c0c0"/><rect x="41" y="299" width="487" height="1" fill="#c0c0c0"/><rect x="41" y="318" width="487" height="1" fill="#c0c0c0"/><rect x="41" y="338" width="487" height="1" fill="#c0c0c0"/><rect x="41" y="357" width="487" height="1" fill="#c0c0c0"/><rect x="41" y="377" width="487" height="1" fill="#c0c0c0"/><rect x="41" y="396" width="487" height="1" fill="#c0c0c0"/><rect x="41" y="416" width="487" height="1" fill="#c0c0c0"/><rect x="41" y="435" width="487" height="1" fill="#c0c0c0"/><rect x="41" y="455" width="487" height="1" fill="#c0c0c0"/><rect x="41" y="474" width="487" height="1" fill="#c0c0c0"/><rect x="53" y="280" width="1" height="200" fill="#c0c0c0"/><rect x="96" y="280" width="1" height="200" fill="#c0c0c0"/><rect x="140" y="280" width="1" height="200" fill="#c0c0c0"/><rect x="184" y="280" width="1" height="200" fill="#c0c0c0"/><rect x="228" y="280" width="1" height="200" fill="#c0c0c0"/><rect x="272" y="280" width="1" height="200" fill="#c0c0c0"/><rect x="315" y="280" width="1" height="200" fill="#c0c0c0"/><rect x="359" y="280" width="1" height="200" fill="#c0c0c0"/><rect x="403" y="280" width="1" height="200" fill="#c0c0c0"/><rect x="447" y="280" width="1" height="200" fill="#c0c0c0"/><rect x="490" y="280" width="1" height="200" fill="#c0c0c0"/><rect x="41" y="280" width="1" height="195" fill="#c0c0c0"/><rect x="527" y="280" width="1" height="195" fill="#c0c0c0"/><rect x="42" y="283" width="3" height="1" fill="#c0c0c0"/><rect x="42" y="287" width="3" height="1" fill="#c0c0c0"/><rect x="42" y="291" width="3" height="1" fill="#c0c0c0"/><rect x="42" y="295" width="3" height="1" fill="#c0c0c0"/><rect x="37" y="299" width="4" height="1" fill="#c0c0c0"/><rect x="42" y="302" width="3" height="1" fill="#c0c0c0"/><rect x="42" y="306" width="3" height="1" fill="#c0c0c0"/><rect x="42" y="310" width="3" height="1" fill="#c0c0c0"/><rect x="42" y="314" width="3" height="1" fill="#c0c0c0"/><rect x="37" y="318" width="4" height="1" fill="#c0c0c0"/><rect x="42" y="322" width="3" height="1" fill="#c0c0c0"/><rect x="42" y="326" width="3" height="1" fill="#c0c0c0"/><rect x="42" y="330" width="3" height="1" fill="#c0c0c0"/><rect x="42" y="334" width="3" height="1" fill="#c0c0c0"/><rect x="37" y="338" width="4" height="1" fill="#c0c0c0"/><rect x="42" y="341" width="3" height="1" fill="#c0c0c0"/><rect x="42" y="345" width="3" height="1" fill="#c0c0c0"/><rect x="42" y="349" width="3" height="1" fill="#c0c0c0"/><rect x="42" y="353" width="3" height="1" fill="#c0c0c0"/><rect x="37" y="357" width="4" height="1" fill="#c0c0c0"/><rect x="42" y="361" width="3" height="1" fill="#c0c0c0"/><rect x="42" y="365" width="3" height="1" fill="#c0c0c0"/><rect x="42" y="369" width="3" height="1" fill="#c0c0c0"/><rect x="42" y="373" width="3" height="1" fill="#c0c0c0"/><rect x="37" y="377" width="4" height="1" fill="#c0c0c0"/><rect x="42" y="380" width="3" height="1" fill="#c0c0c0"/><rect x="42" y="384" width="3" height="1" fill="#c0c0c0"/><rect x="42" y="388" width="3" height="1" fill="#c0c0c0"/><rect x="42" y="392" width="3" height="1" fill="#c0c0c0"/><rect x="37" y="396" width="4" height="1" fill="#c0c0c0"/><rect x="42" y="400" width="3" height="1" fill="#c0c0c0"/><rect x="42" y="404" width="3" height="1" fill="#c0c0c0"/><rect x="42" y="408" width="3" height="1" fill="#c0c0c0"/><rect x="42" y="412" width="3" height="1" fill="#c0c0c0"/><rect x="37" y="416" width="4" height="1" fill="#c0c0c0"/><rect x="42" y="419" width="3" height="1" fill="#c0c0c0"/><rect x="42" y="423" width="3" height="1" fill="#c0c0c0"/><rect x="42" y="427" width="3" height="1" fill="#c0c0c0"/><rect x="42" y="431" width="3" height="1" fill="#c0c0c0"/><rect x="37" y="435" width="4" height="1" fill="#c0c0c0"/><rect x="42" y="439" width="3" height="1" fill="#c0c0c0"/><rect x="42" y="443" width="3" height="1" fill="#c0c0c0"/><rect x="42" y="447" width="3" height="1" fill="#c0c0c0"/><rect x="42" y="451" width="3" height="1" fill="#c0c0c0"/><rect x="37" y="455" width="4" height="1" fill="#c0c0c0"/><rect x="42" y="458" width="3" height="1" fill="#c0c0c0"/><rect x="42" y="462" width="3" height="1" fill="#c0c0c0"/><rect x="42" y="466" width="3" height="1" fill="#c0c0c0"/><rect x="42" y="470" width="3" height="1" fill="#c0c0c0"/><rect x="37" y="474" width="4" height="1" fill="#c0c0c0"/><rect x="524" y="470" width="3" height="1" fill="#c0c0c0"/><rect x="524" y="465" width="3" height="1" fill="#c0c0c0"/><rect x="524" y="460" width="3" height="1" fill="#c0c0c0"/><rect x="524" y="455" width="3" height="1" fill="#c0c0c0"/><rect x="523" y="450" width="11" height="1" fill="#c0c0c0"/><rect x="524" y="445" width="3" height="1" fill="#c0c0c0"/><rect x="524" y="441" width="3" height="1" fill="#c0c0c0"/><rect x="524" y="436" width="3" height="1" fill="#c0c0c0"/><rect x="524" y="431" width="3" height="1" fill="#c0c0c0"/><rect x="523" y="426" width="11" height="1" fill="#c0c0c0"/><rect x="524" y="421" width="3" height="1" fill="#c0c0c0"/><rect x="524" y="416" width="3" height="1" fill="#c0c0c0"/><rect x="524" y="411" width="3" height="1" fill="#c0c0c0"/><rect x="524" y="406" width="3" height="1" fill="#c0c0c0"/><rect x="523" y="402" width="11" height="1" fill="#c0c0c0"/><rect x="524" y="397" width="3" height="1" fill="#c0c0c0"/><rect x="524" y="392" width="3" height="1" fill="#c0c0c0"/><rect x="524" y="387" width="3" height="1" fill="#c0c0c0"/><rect x="524" y="382" width="3" height="1" fill="#c0c0c0"/><rect x="523" y="377" width="11" height="1" fill="#c0c0c0"/><rect x="524" y="372" width="3" height="1" fill="#c0c0c0"/><rect x="524" y="367" width="3" height="1" fill="#c0c0c0"/><rect x="524" y="363" width="3" height="1" fill="#c0c0c0"/><rect x="524" y="358" width="3" height="1" fill="#c0c0c0"/><rect x="523" y="353" width="11" height="1" fill="#c0c0c0"/><rect x="524" y="348" width="3" height="1" fill="#c0c0c0"/><rect x="524" y="343" width="3" height="1" fill="#c0c0c0"/><rect x="524" y="338" width="3" height="1" fill="#c0c0c0"/><rect x="524" y="333" width="3" height="1" fill="#c0c0c0"/><rect x="523" y="328" width="11" height="1" fill="#c0c0c0"/><rect x="524" y="324" width="3" height="1" fill="#c0c0c0"/><rect x="524" y="319" width="3" height="1" fill="#c0c0c0"/><rect x="524" y="314" width="3" height="1" fill="#c0c0c0"/><rect x="524" y="309" width="3" height="1" fill="#c0c0c0"/><rect x="523" y="304" width="11" height="1" fill="#c0c0c0"/><rect x="524" y="299" width="3" height="1" fill="#c0c0c0"/><rect x="524" y="294" width="3" height="1" fill="#c0c0c0"/><rect x="524" y="290" width="3" height="1" fill="#c0c0c0"/><rect x="524" y="285" width="3" height="1" fill="#c0c0c0"/><rect x="523" y="280" width="11" height="1" fill="#c0c0c0"/></svg>
<svg style="left:0;top:0" width="1030" height="633"><path d="M41 377.5 L421.5 377.5 L422.5 372.5 L424.5 377.5 L430.5 377.5 L432.0 372.6 L437.0 372.6 L438.5 367.8 L443.5 367.8 L445.0 362.9 L450.0 362.9 L451.5 358.1 L456.5 358.1 L458.0 353.2 L463.0 353.2 L464.5 348.4 L469.5 348.4 L471.0 343.5 L476.0 343.5 L477.5 338.7 L482.5 338.7 L484.0 333.8 L489.0 333.8 L490.5 329.0 L495.5 329.0 L497.0 324.1 L502.0 324.1 L503.5 319.3 L508.5 319.3 L510.0 314.4 L515.0 314.4 L516.5 309.6 L521.5 309.6 L523.0 304.7 L528.0 304.7" stroke="#00ff00" stroke-width="1" fill="none"/><path d="M422.5 474 L422.5 455 L423.5 455 L423.5 416 L424.5 416 L424.5 396.5 L427.5 396.5 L527.5 290" stroke="#ff0000" stroke-width="1" fill="none"/></svg>
<div class="t" style="left:16.50px;top:470.80px;width:20px;text-align:right;font-size:8.5px;line-height:8.5px;color:#ff8080">0</div>
<div class="t" style="left:16.50px;top:451.40px;width:20px;text-align:right;font-size:8.5px;line-height:8.5px;color:#ff8080">5</div>
<div class="t" style="left:16.50px;top:432.00px;width:20px;text-align:right;font-size:8.5px;line-height:8.5px;color:#ff8080">10</div>
<div class="t" style="left:16.50px;top:412.60px;width:20px;text-align:right;font-size:8.5px;line-height:8.5px;color:#ff8080">15</div>
<div class="t" style="left:16.50px;top:393.20px;width:20px;text-align:right;font-size:8.5px;line-height:8.5px;color:#ff8080">20</div>
<div class="t" style="left:16.50px;top:373.80px;width:20px;text-align:right;font-size:8.5px;line-height:8.5px;color:#ff8080">25</div>
<div class="t" style="left:16.50px;top:354.40px;width:20px;text-align:right;font-size:8.5px;line-height:8.5px;color:#ff8080">30</div>
<div class="t" style="left:16.50px;top:335.00px;width:20px;text-align:right;font-size:8.5px;line-height:8.5px;color:#ff8080">35</div>
<div class="t" style="left:16.50px;top:315.60px;width:20px;text-align:right;font-size:8.5px;line-height:8.5px;color:#ff8080">40</div>
<div class="t" style="left:16.50px;top:296.20px;width:20px;text-align:right;font-size:8.5px;line-height:8.5px;color:#ff8080">45</div>
<div class="t" style="left:535px;top:446.05px;font-size:8.5px;line-height:8.5px;color:#c0ffc0">-0.015</div>
<div class="t" style="left:535px;top:421.70px;font-size:8.5px;line-height:8.5px;color:#c0ffc0">-0.010</div>
<div class="t" style="left:535px;top:397.35px;font-size:8.5px;line-height:8.5px;color:#c0ffc0">-0.005</div>
<div class="t" style="left:535px;top:373.00px;font-size:8.5px;line-height:8.5px;color:#c0ffc0">0.000</div>
<div class="t" style="left:535px;top:348.65px;font-size:8.5px;line-height:8.5px;color:#c0ffc0">0.005</div>
<div class="t" style="left:535px;top:324.30px;font-size:8.5px;line-height:8.5px;color:#c0ffc0">0.010</div>
<div class="t" style="left:535px;top:299.95px;font-size:8.5px;line-height:8.5px;color:#c0ffc0">0.015</div>
<div class="t" style="left:-18.0px;top:372.0px;width:80px;height:10px;text-align:center;font-size:9px;line-height:10px;color:#ff8080;transform:rotate(-90deg);will-change:auto">Temperature</div>
<div class="t" style="left:526.0px;top:372.0px;width:80px;height:10px;text-align:center;font-size:9px;line-height:10px;color:#c0ffc0;transform:rotate(90deg);will-change:auto">Expansion [%]</div>
<div class="t" style="left:416.00px;top:480.23px;width:60px;text-align:center;font-size:8px;line-height:8px;">00:01:54</div>
<div class="t" style="left:460.50px;top:480.23px;width:60px;text-align:center;font-size:8px;line-height:8px;">00:03:06</div>
<div class="t" style="left:183.00px;top:489.06px;width:200px;text-align:center;font-size:8.2px;line-height:8.2px;font-weight:bold;">Run-Time Strip Chart - Time</div>
<div style="left:17px;top:498px;width:553px;height:17px;background:linear-gradient(180deg,#f0eee4 0,#faf9f4 50%,#fdfdfb 100%)"></div>
<div style="left:18px;top:500px;width:14px;height:13px;border-radius:2px;border:1px solid #8c9c70;background:linear-gradient(135deg,#c0cca0 0,#a8b888 40%,#94a474 100%);box-shadow:0 1px 0 #fff, 0 2px 0 #7cb060">
<svg style="left:0;top:0" width="14" height="13"><path d="M8 3 L4.5 6.5 L8 10" stroke="#fff" stroke-width="2" fill="none"/></svg>
</div>
<div style="left:537px;top:500px;width:14px;height:13px;border-radius:2px;border:1px solid #8c9c70;background:linear-gradient(135deg,#c0cca0 0,#a8b888 40%,#94a474 100%);box-shadow:0 1px 0 #fff, 0 2px 0 #7cb060">
<svg style="left:0;top:0" width="14" height="13" shape-rendering="crispEdges"><rect x="3" y="3" width="1" height="7" fill="#e0ecb8"/><rect x="5" y="3" width="1" height="7" fill="#e0ecb8"/><rect x="7" y="3" width="1" height="7" fill="#e0ecb8"/><rect x="9" y="3" width="1" height="7" fill="#e0ecb8"/></svg>
</div>
<div style="left:554px;top:500px;width:14px;height:13px;border-radius:2px;border:1px solid #8c9c70;background:linear-gradient(135deg,#c0cca0 0,#a8b888 40%,#94a474 100%);box-shadow:0 1px 0 #fff, 0 2px 0 #7cb060">
<svg style="left:0;top:0" width="14" height="13"><path d="M5 3 L8.5 6.5 L5 10" stroke="#fff" stroke-width="2" fill="none"/></svg>
</div>
<div style="left:17px;top:522px;width:551px;height:1px;background:#d8d4c8"></div>
<div style="left:17px;top:523px;width:551px;height:1px;background:#fff"></div>
<div style="left:17px;top:524px;width:550px;height:22px;background:#fff"></div>
<div style="left:17px;top:546px;width:551px;height:2px;background:#c8c4b8"></div>
<div style="left:567px;top:522px;width:2px;height:68px;background:#c8c4b8"></div>
<div style="left:17px;top:548px;width:551px;height:20px;background:#fff;border:1.5px solid #000;border-left:none"></div>
<div style="left:17px;top:568px;width:550px;height:21px;background:#fff"></div>
<div style="left:17px;top:589px;width:551px;height:1px;background:#c8c4b8"></div>
<div style="left:17px;top:522px;width:550px;height:68px;overflow:hidden">
<div class="t" style="left:-2px;top:5.53px;font-size:10.6px;line-height:10.6px;color:#aca899">Seg  1 of  4: Ramp 0.0°C/min To 20.0°C Hold For 0.1min  No Log:1sec Spd 0. Mtr: N  FTop: N  Frc=0.0</div>
<div class="t" style="left:-2px;top:29.03px;font-size:10.6px;line-height:10.6px;color:#000">Seg  2 of  4: Ramp 10.0°C/min To 0800.0°C Hold For 00.5min  Log:1sec Spd 0. Mtr: N  FTop: N  Frc=0.0</div>
<div class="t" style="left:-2px;top:48.53px;font-size:10.6px;line-height:10.6px;color:#aca899">Seg  3 of  4: Ramp 03.0°C/min To 1200.0°C Hold For 00.5min  Log:1sec Spd 0. Mtr: N  FTop: N  Frc=0.0</div>
</div>
<div class="t" style="left:22px;top:603.03px;font-size:10.6px;line-height:10.6px;">Temp.Prog.Seg  2 of 4</div>
<div class="t" style="left:194px;top:603.11px;font-size:10.5px;line-height:10.5px;">Time Rem. this seg.</div>
<div class="t" style="left:295.5px;top:603.11px;font-size:10.5px;line-height:10.5px;">01:15:44</div>
<div class="t" style="left:361px;top:603.11px;font-size:10.5px;line-height:10.5px;">Cycle 0 of</div>
<div style="left:458px;top:600px;width:105px;height:20px;background:#ece9d8;border-top:1px solid #fff;border-left:1px solid #fff;border-right:1px solid #404040;border-bottom:1px solid #404040;box-shadow:inset -1px -1px 0 #aca899"></div>
<div class="t" style="left:458.00px;top:604.87px;width:105px;text-align:center;font-size:10.2px;line-height:10.2px;">Edit Temp Program</div>
<div style="left:571px;top:461px;width:96px;height:106px;background:#e0e0e0;border-top:1px solid #fff;border-left:1px solid #fff;border-right:1px solid #000;border-bottom:1px solid #000;box-shadow:inset -1px -1px 0 #808080"></div>
<div style="left:617px;top:440px;width:49px;height:21px;background:#c0c0c0;border-top:1px solid #fff;border-left:1px solid #fff;border-right:1px solid #000;border-radius:4px 4px 0 0"></div>
<div style="left:571px;top:438px;width:47px;height:24px;background:#e0e0e0;border-top:1px solid #fff;border-left:1px solid #fff;border-right:1px solid #000;border-radius:4px 4px 0 0"></div>
<div class="t" style="left:577.5px;top:443.69px;font-size:11px;line-height:11px;">Graph</div>
<div class="t" style="left:627px;top:443.29px;font-size:11px;line-height:11px;">Valve</div>
<div style="left:573px;top:461px;width:89px;height:101px;background:#e0e0e0;border:1px solid #aca899;box-shadow:inset 1px 1px 0 #fff, 1px 1px 0 #fff"></div>
<div style="left:580px;top:466px;width:13px;height:13px;background:#fff;border:2px solid #000"></div>
<svg style="left:580px;top:466px" width="13" height="13"><path d="M3.5 6.5 L5.5 9 L10 3.5" stroke="#000" stroke-width="2" fill="none"/></svg>
<div class="t" style="left:598px;top:467.39px;font-size:11px;line-height:11px;">Auto Scale</div>
<div class="t" style="left:598.5px;top:486.11px;font-size:10.5px;line-height:10.5px;color:#aca899">Upper Limit</div>
<div class="t" style="left:599.8px;top:522.61px;font-size:10.5px;line-height:10.5px;color:#aca899">Lower Limit</div>
<div style="left:593px;top:501px;width:63px;height:19px;background:#fff;border:1px solid #000;box-shadow:inset 1px 1px 0 #808080"></div>
<div class="t" style="left:597px;top:504.84px;font-size:12px;line-height:12px;font-weight:bold;color:#aca899">0.0</div>
<div style="left:642px;top:502px;width:13px;height:17px;background:#e0e0e0;border-left:1px solid #000"></div>
<svg style="left:643px;top:503px" width="12" height="16"><path d="M6 1 L11 6.5 L1 6.5 Z M1 9 L11 9 L6 14.5 Z" fill="#000"/></svg>
<div style="left:593px;top:535px;width:63px;height:19px;background:#fff;border:1px solid #000;box-shadow:inset 1px 1px 0 #808080"></div>
<div class="t" style="left:597px;top:538.84px;font-size:12px;line-height:12px;font-weight:bold;color:#aca899">0.0</div>
<div style="left:642px;top:536px;width:13px;height:17px;background:#e0e0e0;border-left:1px solid #000"></div>
<svg style="left:643px;top:537px" width="12" height="16"><path d="M6 1 L11 6.5 L1 6.5 Z M1 9 L11 9 L6 14.5 Z" fill="#000"/></svg>
<div style="left:573px;top:566px;width:92px;height:47px;background:#e0e0e0;border:1px solid #aca899;box-shadow:inset 1px 1px 0 #fff, 1px 1px 0 #fff"></div>
<div class="t" style="left:590px;top:575.69px;font-size:11px;line-height:11px;">Switches</div>
<div style="left:590px;top:592px;width:13px;height:13px;background:#ece9d8;border:1px solid #c8c4b0;box-shadow:inset 1px 1px 0 #aca899"></div>
<div style="left:606px;top:592px;width:13px;height:13px;background:#ece9d8;border:1px solid #c8c4b0;box-shadow:inset 1px 1px 0 #aca899"></div>
<div style="left:622px;top:592px;width:13px;height:13px;background:#ece9d8;border:1px solid #c8c4b0;box-shadow:inset 1px 1px 0 #aca899"></div>
<div style="left:638px;top:592px;width:13px;height:13px;background:#ece9d8;border:1px solid #c8c4b0;box-shadow:inset 1px 1px 0 #aca899"></div>
<svg style="left:590px;top:592px" width="13" height="13"><path d="M3 6 L5.5 9 L10 3.5" stroke="#aca899" stroke-width="1.6" fill="none"/></svg>
<div style="left:679px;top:122px;width:335px;height:254px;background:#c0c0c0"></div>
<div style="left:679px;top:122px;width:335px;height:44px;background:#e0e0e0;border-top:1px solid #fff;border-left:1px solid #fff;border-bottom:1px solid #000;box-shadow:inset 0 -1px 0 #a8a490"></div>
<div style="left:686px;top:128px;width:28px;height:28px;background:#f0f0f0"></div>
<svg style="left:687px;top:129px" width="26" height="26" shape-rendering="crispEdges"><rect x="0" y="0" width="26" height="26" fill="#c0c0c0"/><rect x="5" y="6" width="1" height="1" fill="#000"/><rect x="5" y="9" width="1" height="1" fill="#000"/><rect x="5" y="12" width="1" height="1" fill="#000"/><rect x="5" y="15" width="1" height="1" fill="#000"/><rect x="5" y="18" width="1" height="1" fill="#000"/><rect x="5" y="21" width="1" height="1" fill="#000"/><rect x="5" y="21" width="1" height="1" fill="#000"/><rect x="8" y="21" width="1" height="1" fill="#000"/><rect x="11" y="21" width="1" height="1" fill="#000"/><rect x="14" y="21" width="1" height="1" fill="#000"/><rect x="17" y="21" width="1" height="1" fill="#000"/><rect x="20" y="21" width="1" height="1" fill="#000"/><path d="M7 17 L11 13 L14 16 L21 9" stroke="#000" stroke-width="1.3" fill="none" shape-rendering="auto"/></svg>
<div style="left:687px;top:129px;width:26px;height:26px;border:1px solid #000;border-radius:2px"></div>
<svg style="left:718px;top:128px" width="28.0" height="28.0" viewBox="0 0 28 28"><rect x="0" y="0" width="28" height="28" fill="#c0c0c0"/><path d="M9 3 L22 3 L20 10 L6 10 Z" fill="#fff" stroke="#000" stroke-width="1"/><path d="M10 5.5 L19 5.5 M9 7.5 L18 7.5" stroke="#000" stroke-width="0.8"/><rect x="1.5" y="11" width="23" height="11" rx="2" fill="#c0c0c0" stroke="#000" stroke-width="1.2"/><path d="M2 15 L24 15 M4 19 L22 19" stroke="#000" stroke-width="1"/><rect x="13" y="16" width="4" height="2" fill="#ffff00"/><rect x="4" y="22" width="18" height="4" fill="#c0c0c0" stroke="#000" stroke-width="1"/></svg>
<svg style="left:758px;top:128px" width="28" height="28"><rect x="0" y="0" width="28" height="28" fill="#e8e8e8"/><path d="M3 9 L6 9 L9 5 L12 3.5 L15 4 L18 7 L21 5.5 L24 8" stroke="#ff0000" stroke-width="1.3" fill="none"/><path d="M1.5 2 V 27 M1.5 26.5 H27" stroke="#000" stroke-width="0.8" stroke-dasharray="1 2.5" fill="none"/><text x="14.5" y="22.6" text-anchor="middle" font-family="Liberation Sans" font-weight="bold" font-size="21.8" textLength="23" lengthAdjust="spacingAndGlyphs" fill="#000">EXIT</text></svg>
<div style="left:866px;top:128px;width:17px;height:16px;background:#fff;border:1px solid #f0eee4;box-shadow:inset 1px 1px 0 #808080, inset 2px 2px 0 #404040, inset -1px -1px 0 #d4d0c8"></div>
<svg style="left:866px;top:128px" width="17" height="16"><path d="M5 8 L7.5 11 L12 5" stroke="#000" stroke-width="2.2" fill="none"/></svg>
<div style="left:866px;top:144px;width:18px;height:14px;background:#80ff80;border-left:1px solid #fff;border-top:1px solid #fff;border-right:1px solid #c0c0b0;border-bottom:1px solid #c0c0b0"></div>
<svg style="left:866px;top:144px" width="18" height="14" shape-rendering="crispEdges"><path d="M8 3 H11 V12 H8 Z M6 5 H8 V6 H6 Z M7 4 H8 V5 H7 Z" fill="#000"/></svg>
<svg style="left:0;top:0" width="1030" height="633" shape-rendering="crispEdges"><rect x="704" y="367" width="299" height="2" fill="#808080"/><rect x="1001" y="169" width="2" height="200" fill="#808080"/><rect x="702" y="168" width="299" height="199" fill="#000"/><rect x="698" y="366" width="303" height="1" fill="#e0e0e0"/><rect x="698" y="333" width="303" height="1" fill="#e0e0e0"/><rect x="698" y="299" width="303" height="1" fill="#e0e0e0"/><rect x="698" y="266" width="303" height="1" fill="#e0e0e0"/><rect x="698" y="232" width="303" height="1" fill="#e0e0e0"/><rect x="698" y="199" width="303" height="1" fill="#e0e0e0"/><rect x="716" y="168" width="1" height="202" fill="#e0e0e0"/><rect x="745" y="168" width="1" height="202" fill="#e0e0e0"/><rect x="775" y="168" width="1" height="202" fill="#e0e0e0"/><rect x="804" y="168" width="1" height="202" fill="#e0e0e0"/><rect x="834" y="168" width="1" height="202" fill="#e0e0e0"/><rect x="863" y="168" width="1" height="202" fill="#e0e0e0"/><rect x="893" y="168" width="1" height="202" fill="#e0e0e0"/><rect x="922" y="168" width="1" height="202" fill="#e0e0e0"/><rect x="952" y="168" width="1" height="202" fill="#e0e0e0"/><rect x="981" y="168" width="1" height="202" fill="#e0e0e0"/><rect x="702" y="168" width="1" height="199" fill="#e0e0e0"/><rect x="702" y="366" width="299" height="1" fill="#e0e0e0"/><rect x="702" y="168" width="299" height="1" fill="#e0e0e0"/><rect x="703" y="359" width="2" height="1" fill="#e0e0e0"/><rect x="703" y="353" width="2" height="1" fill="#e0e0e0"/><rect x="703" y="346" width="2" height="1" fill="#e0e0e0"/><rect x="703" y="339" width="2" height="1" fill="#e0e0e0"/><rect x="703" y="326" width="2" height="1" fill="#e0e0e0"/><rect x="703" y="319" width="2" height="1" fill="#e0e0e0"/><rect x="703" y="313" width="2" height="1" fill="#e0e0e0"/><rect x="703" y="306" width="2" height="1" fill="#e0e0e0"/><rect x="703" y="293" width="2" height="1" fill="#e0e0e0"/><rect x="703" y="286" width="2" height="1" fill="#e0e0e0"/><rect x="703" y="279" width="2" height="1" fill="#e0e0e0"/><rect x="703" y="273" width="2" height="1" fill="#e0e0e0"/><rect x="703" y="259" width="2" height="1" fill="#e0e0e0"/><rect x="703" y="253" width="2" height="1" fill="#e0e0e0"/><rect x="703" y="246" width="2" height="1" fill="#e0e0e0"/><rect x="703" y="239" width="2" height="1" fill="#e0e0e0"/><rect x="703" y="226" width="2" height="1" fill="#e0e0e0"/><rect x="703" y="219" width="2" height="1" fill="#e0e0e0"/><rect x="703" y="213" width="2" height="1" fill="#e0e0e0"/><rect x="703" y="206" width="2" height="1" fill="#e0e0e0"/><rect x="703" y="193" width="2" height="1" fill="#e0e0e0"/><rect x="703" y="186" width="2" height="1" fill="#e0e0e0"/><rect x="703" y="180" width="2" height="1" fill="#e0e0e0"/><rect x="703" y="173" width="2" height="1" fill="#e0e0e0"/><rect x="704" y="363" width="1" height="3" fill="#e0e0e0"/><rect x="710" y="363" width="1" height="3" fill="#e0e0e0"/><rect x="722" y="363" width="1" height="3" fill="#e0e0e0"/><rect x="728" y="363" width="1" height="3" fill="#e0e0e0"/><rect x="734" y="363" width="1" height="3" fill="#e0e0e0"/><rect x="740" y="363" width="1" height="3" fill="#e0e0e0"/><rect x="751" y="363" width="1" height="3" fill="#e0e0e0"/><rect x="757" y="363" width="1" height="3" fill="#e0e0e0"/><rect x="763" y="363" width="1" height="3" fill="#e0e0e0"/><rect x="769" y="363" width="1" height="3" fill="#e0e0e0"/><rect x="781" y="363" width="1" height="3" fill="#e0e0e0"/><rect x="787" y="363" width="1" height="3" fill="#e0e0e0"/><rect x="793" y="363" width="1" height="3" fill="#e0e0e0"/><rect x="799" y="363" width="1" height="3" fill="#e0e0e0"/><rect x="811" y="363" width="1" height="3" fill="#e0e0e0"/><rect x="816" y="363" width="1" height="3" fill="#e0e0e0"/><rect x="822" y="363" width="1" height="3" fill="#e0e0e0"/><rect x="828" y="363" width="1" height="3" fill="#e0e0e0"/><rect x="840" y="363" width="1" height="3" fill="#e0e0e0"/><rect x="846" y="363" width="1" height="3" fill="#e0e0e0"/><rect x="852" y="363" width="1" height="3" fill="#e0e0e0"/><rect x="858" y="363" width="1" height="3" fill="#e0e0e0"/><rect x="870" y="363" width="1" height="3" fill="#e0e0e0"/><rect x="876" y="363" width="1" height="3" fill="#e0e0e0"/><rect x="881" y="363" width="1" height="3" fill="#e0e0e0"/><rect x="887" y="363" width="1" height="3" fill="#e0e0e0"/><rect x="899" y="363" width="1" height="3" fill="#e0e0e0"/><rect x="905" y="363" width="1" height="3" fill="#e0e0e0"/><rect x="911" y="363" width="1" height="3" fill="#e0e0e0"/><rect x="917" y="363" width="1" height="3" fill="#e0e0e0"/><rect x="929" y="363" width="1" height="3" fill="#e0e0e0"/><rect x="935" y="363" width="1" height="3" fill="#e0e0e0"/><rect x="941" y="363" width="1" height="3" fill="#e0e0e0"/><rect x="946" y="363" width="1" height="3" fill="#e0e0e0"/><rect x="958" y="363" width="1" height="3" fill="#e0e0e0"/><rect x="964" y="363" width="1" height="3" fill="#e0e0e0"/><rect x="970" y="363" width="1" height="3" fill="#e0e0e0"/><rect x="976" y="363" width="1" height="3" fill="#e0e0e0"/><rect x="988" y="363" width="1" height="3" fill="#e0e0e0"/><rect x="994" y="363" width="1" height="3" fill="#e0e0e0"/><rect x="1000" y="363" width="1" height="3" fill="#e0e0e0"/></svg>
<svg style="left:0;top:0" width="1030" height="633"><path d="M834 365.5 L870 320 L900 283 L930 245 L960 208 L986.5 176.5" stroke="#00e000" stroke-width="1" fill="none"/></svg>
<div class="t" style="left:669.50px;top:362.43px;width:30px;text-align:right;font-size:8px;line-height:8px;color:#008000">0</div>
<div class="t" style="left:669.50px;top:329.43px;width:30px;text-align:right;font-size:8px;line-height:8px;color:#008000">25</div>
<div class="t" style="left:669.50px;top:295.43px;width:30px;text-align:right;font-size:8px;line-height:8px;color:#008000">50</div>
<div class="t" style="left:669.50px;top:262.43px;width:30px;text-align:right;font-size:8px;line-height:8px;color:#008000">75</div>
<div class="t" style="left:669.50px;top:228.43px;width:30px;text-align:right;font-size:8px;line-height:8px;color:#008000">100</div>
<div class="t" style="left:669.50px;top:195.43px;width:30px;text-align:right;font-size:8px;line-height:8px;color:#008000">125</div>
<div class="t" style="left:706.50px;top:370.53px;width:20px;text-align:center;font-size:8px;line-height:8px;">0</div>
<div class="t" style="left:735.50px;top:370.53px;width:20px;text-align:center;font-size:8px;line-height:8px;">5</div>
<div class="t" style="left:765.50px;top:370.53px;width:20px;text-align:center;font-size:8px;line-height:8px;">10</div>
<div class="t" style="left:794.50px;top:370.53px;width:20px;text-align:center;font-size:8px;line-height:8px;">15</div>
<div class="t" style="left:824.50px;top:370.53px;width:20px;text-align:center;font-size:8px;line-height:8px;">20</div>
<div class="t" style="left:853.50px;top:370.53px;width:20px;text-align:center;font-size:8px;line-height:8px;">25</div>
<div class="t" style="left:883.50px;top:370.53px;width:20px;text-align:center;font-size:8px;line-height:8px;">30</div>
<div class="t" style="left:912.50px;top:370.53px;width:20px;text-align:center;font-size:8px;line-height:8px;">35</div>
<div class="t" style="left:942.50px;top:370.53px;width:20px;text-align:center;font-size:8px;line-height:8px;">40</div>
<div class="t" style="left:971.50px;top:370.53px;width:20px;text-align:center;font-size:8px;line-height:8px;">45</div>
<div class="t" style="left:644.0px;top:264.0px;width:80px;height:8px;text-align:center;font-size:7.6px;line-height:8px;color:#008000;transform:rotate(-90deg);will-change:auto">Expansion X 10^-6</div>
<div style="left:678px;top:409px;width:341px;height:213px;background:#c0c0c0"></div>
<div style="left:678px;top:409px;width:341px;height:38px;background:#e0e0e0;border-top:1px solid #fff;border-left:1px solid #fff;border-bottom:1px solid #000;border-right:1px solid #000;box-shadow:inset 0 -1px 0 #a8a490"></div>
<svg style="left:691px;top:412px" width="26" height="27" shape-rendering="crispEdges"><rect x="2" y="1" width="23" height="22" fill="#c0c0c0"/><rect x="2" y="6" width="23" height="2" fill="#fff"/><rect x="2" y="13" width="23" height="2" fill="#fff"/><rect x="2" y="19" width="23" height="2" fill="#fff"/><rect x="14" y="1" width="2" height="22" fill="#fff"/><rect x="20" y="1" width="2" height="22" fill="#fff"/><rect x="1" y="1" width="1" height="24" fill="#000"/><rect x="1" y="24" width="24" height="1" fill="#000"/><path d="M2 10 L6 8 L9 9 L12 7 L16 8 L19 5 L22 7 L25 5" stroke="#ff0000" stroke-width="1.4" fill="none" shape-rendering="auto"/><path d="M2 18 L6 15 L9 17 L12 14 L16 15 L19 11 L22 15 L25 12" stroke="#000" stroke-width="1.2" fill="none" shape-rendering="auto"/></svg>
<div style="left:719px;top:413px;width:27px;height:26px;background:#f0f0f0"></div>
<div style="left:720px;top:414px;width:25px;height:24px;background:#c0c0c0;border:1px solid #000;border-radius:2px"></div>
<svg style="left:721px;top:415px" width="22.400000000000002" height="22.400000000000002" viewBox="0 0 28 28"><path d="M9 3 L22 3 L20 10 L6 10 Z" fill="#fff" stroke="#000" stroke-width="1"/><path d="M10 5.5 L19 5.5 M9 7.5 L18 7.5" stroke="#000" stroke-width="0.8"/><rect x="1.5" y="11" width="23" height="11" rx="2" fill="#c0c0c0" stroke="#000" stroke-width="1.2"/><path d="M2 15 L24 15 M4 19 L22 19" stroke="#000" stroke-width="1"/><rect x="13" y="16" width="4" height="2" fill="#ffff00"/><rect x="4" y="22" width="18" height="4" fill="#c0c0c0" stroke="#000" stroke-width="1"/></svg>
<svg style="left:746px;top:412px" width="26" height="26"><rect x="0" y="0" width="26" height="26" fill="#e0e0e0"/><path d="M3 9 L6 9 L9 5 L12 3.5 L15 4 L18 7 L21 5.5 L24 8" stroke="#ff0000" stroke-width="1.3" fill="none"/><path d="M1.5 2 V 25 M1.5 24.5 H25" stroke="#000" stroke-width="0.8" stroke-dasharray="1 2.5" fill="none"/><text x="13.5" y="22" text-anchor="middle" font-family="Liberation Sans" font-weight="bold" font-size="19.6" textLength="21" lengthAdjust="spacingAndGlyphs" fill="#000">EXIT</text></svg>
<div style="left:865px;top:413px;width:14px;height:14px;background:#fff;border:1px solid #f0eee4;box-shadow:inset 1px 1px 0 #808080, inset 2px 2px 0 #404040, inset -1px -1px 0 #d4d0c8"></div>
<svg style="left:865px;top:413px" width="14" height="14"><path d="M4 7 L6.5 10 L10.5 4" stroke="#000" stroke-width="2" fill="none"/></svg>
<div style="left:866px;top:429px;width:16px;height:12px;background:#80ff80"></div>
<svg style="left:866px;top:429px" width="16" height="12" shape-rendering="crispEdges"><path d="M7 2 H10 V11 H7 Z M5 4 H7 V5 H5 Z M6 3 H7 V4 H6 Z" fill="#000"/></svg>
<svg style="left:0;top:0" width="1030" height="633" shape-rendering="crispEdges"><rect x="696" y="606" width="306" height="2" fill="#808080"/><rect x="1000" y="449" width="1" height="159" fill="#808080"/><rect x="694" y="448" width="306" height="158" fill="#000"/><rect x="690" y="598" width="310" height="1" fill="#e0e0e0"/><rect x="690" y="571" width="310" height="1" fill="#e0e0e0"/><rect x="690" y="543" width="310" height="1" fill="#e0e0e0"/><rect x="690" y="516" width="310" height="1" fill="#e0e0e0"/><rect x="690" y="488" width="310" height="1" fill="#e0e0e0"/><rect x="690" y="461" width="310" height="1" fill="#e0e0e0"/><rect x="708" y="448" width="1" height="161" fill="#e0e0e0"/><rect x="760" y="448" width="1" height="161" fill="#e0e0e0"/><rect x="811" y="448" width="1" height="161" fill="#e0e0e0"/><rect x="863" y="448" width="1" height="161" fill="#e0e0e0"/><rect x="914" y="448" width="1" height="161" fill="#e0e0e0"/><rect x="965" y="448" width="1" height="161" fill="#e0e0e0"/><rect x="694" y="448" width="1" height="158" fill="#e0e0e0"/><rect x="694" y="605" width="306" height="1" fill="#e0e0e0"/><rect x="694" y="448" width="306" height="1" fill="#e0e0e0"/><rect x="695" y="604" width="3" height="1" fill="#e0e0e0"/><rect x="695" y="593" width="3" height="1" fill="#e0e0e0"/><rect x="695" y="587" width="3" height="1" fill="#e0e0e0"/><rect x="695" y="582" width="3" height="1" fill="#e0e0e0"/><rect x="695" y="576" width="3" height="1" fill="#e0e0e0"/><rect x="695" y="565" width="3" height="1" fill="#e0e0e0"/><rect x="695" y="560" width="3" height="1" fill="#e0e0e0"/><rect x="695" y="554" width="3" height="1" fill="#e0e0e0"/><rect x="695" y="549" width="3" height="1" fill="#e0e0e0"/><rect x="695" y="538" width="3" height="1" fill="#e0e0e0"/><rect x="695" y="532" width="3" height="1" fill="#e0e0e0"/><rect x="695" y="527" width="3" height="1" fill="#e0e0e0"/><rect x="695" y="521" width="3" height="1" fill="#e0e0e0"/><rect x="695" y="510" width="3" height="1" fill="#e0e0e0"/><rect x="695" y="505" width="3" height="1" fill="#e0e0e0"/><rect x="695" y="499" width="3" height="1" fill="#e0e0e0"/><rect x="695" y="494" width="3" height="1" fill="#e0e0e0"/><rect x="695" y="483" width="3" height="1" fill="#e0e0e0"/><rect x="695" y="477" width="3" height="1" fill="#e0e0e0"/><rect x="695" y="472" width="3" height="1" fill="#e0e0e0"/><rect x="695" y="466" width="3" height="1" fill="#e0e0e0"/><rect x="695" y="455" width="3" height="1" fill="#e0e0e0"/><rect x="695" y="450" width="3" height="1" fill="#e0e0e0"/><rect x="698" y="601" width="1" height="4" fill="#e0e0e0"/><rect x="719" y="601" width="1" height="4" fill="#e0e0e0"/><rect x="729" y="601" width="1" height="4" fill="#e0e0e0"/><rect x="739" y="601" width="1" height="4" fill="#e0e0e0"/><rect x="750" y="601" width="1" height="4" fill="#e0e0e0"/><rect x="770" y="601" width="1" height="4" fill="#e0e0e0"/><rect x="780" y="601" width="1" height="4" fill="#e0e0e0"/><rect x="791" y="601" width="1" height="4" fill="#e0e0e0"/><rect x="801" y="601" width="1" height="4" fill="#e0e0e0"/><rect x="821" y="601" width="1" height="4" fill="#e0e0e0"/><rect x="832" y="601" width="1" height="4" fill="#e0e0e0"/><rect x="842" y="601" width="1" height="4" fill="#e0e0e0"/><rect x="852" y="601" width="1" height="4" fill="#e0e0e0"/><rect x="873" y="601" width="1" height="4" fill="#e0e0e0"/><rect x="883" y="601" width="1" height="4" fill="#e0e0e0"/><rect x="893" y="601" width="1" height="4" fill="#e0e0e0"/><rect x="904" y="601" width="1" height="4" fill="#e0e0e0"/><rect x="924" y="601" width="1" height="4" fill="#e0e0e0"/><rect x="935" y="601" width="1" height="4" fill="#e0e0e0"/><rect x="945" y="601" width="1" height="4" fill="#e0e0e0"/><rect x="955" y="601" width="1" height="4" fill="#e0e0e0"/><rect x="976" y="601" width="1" height="4" fill="#e0e0e0"/><rect x="986" y="601" width="1" height="4" fill="#e0e0e0"/><rect x="996" y="601" width="1" height="4" fill="#e0e0e0"/><rect x="996" y="600" width="3" height="1" fill="#e0e0e0"/><rect x="996" y="595" width="3" height="1" fill="#e0e0e0"/><rect x="996" y="589" width="3" height="1" fill="#e0e0e0"/><rect x="996" y="584" width="3" height="1" fill="#e0e0e0"/><rect x="996" y="574" width="3" height="1" fill="#e0e0e0"/><rect x="996" y="568" width="3" height="1" fill="#e0e0e0"/><rect x="996" y="563" width="3" height="1" fill="#e0e0e0"/><rect x="996" y="558" width="3" height="1" fill="#e0e0e0"/><rect x="996" y="547" width="3" height="1" fill="#e0e0e0"/><rect x="996" y="542" width="3" height="1" fill="#e0e0e0"/><rect x="996" y="536" width="3" height="1" fill="#e0e0e0"/><rect x="996" y="531" width="3" height="1" fill="#e0e0e0"/><rect x="996" y="520" width="3" height="1" fill="#e0e0e0"/><rect x="996" y="515" width="3" height="1" fill="#e0e0e0"/><rect x="996" y="510" width="3" height="1" fill="#e0e0e0"/><rect x="996" y="505" width="3" height="1" fill="#e0e0e0"/><rect x="996" y="494" width="3" height="1" fill="#e0e0e0"/><rect x="996" y="489" width="3" height="1" fill="#e0e0e0"/><rect x="996" y="483" width="3" height="1" fill="#e0e0e0"/><rect x="996" y="478" width="3" height="1" fill="#e0e0e0"/><rect x="996" y="468" width="3" height="1" fill="#e0e0e0"/><rect x="996" y="462" width="3" height="1" fill="#e0e0e0"/><rect x="996" y="457" width="3" height="1" fill="#e0e0e0"/><rect x="996" y="452" width="3" height="1" fill="#e0e0e0"/><rect x="995" y="605" width="8" height="1" fill="#e0e0e0"/><rect x="995" y="579" width="8" height="1" fill="#e0e0e0"/><rect x="995" y="552" width="8" height="1" fill="#e0e0e0"/><rect x="995" y="526" width="8" height="1" fill="#e0e0e0"/><rect x="995" y="499" width="8" height="1" fill="#e0e0e0"/><rect x="995" y="473" width="8" height="1" fill="#e0e0e0"/></svg>
<svg style="left:0;top:0" width="1030" height="633"><path d="M718.6 598 L740 586.5 L752 580.4 L760 577.5 L768 570.4 L800 554 L830 539 L860 523 L890 507 L920 491 L950 475 L981 459.3" stroke="#ff0000" stroke-width="1" fill="none"/><path d="M718.6 604.5 L735 596 L750 586 L762 582.2 L770 576 L800 560 L830 545 L860 528 L890 511 L920 494 L950 477 L985.7 455.5" stroke="#00ff00" stroke-width="1" fill="none"/></svg>
<div class="t" style="left:662.00px;top:594.87px;width:30px;text-align:right;font-size:7px;line-height:7px;color:#b06060">20</div>
<div class="t" style="left:662.00px;top:567.37px;width:30px;text-align:right;font-size:7px;line-height:7px;color:#b06060">25</div>
<div class="t" style="left:662.00px;top:539.87px;width:30px;text-align:right;font-size:7px;line-height:7px;color:#b06060">30</div>
<div class="t" style="left:662.00px;top:512.37px;width:30px;text-align:right;font-size:7px;line-height:7px;color:#b06060">35</div>
<div class="t" style="left:662.00px;top:484.87px;width:30px;text-align:right;font-size:7px;line-height:7px;color:#b06060">40</div>
<div class="t" style="left:662.00px;top:457.37px;width:30px;text-align:right;font-size:7px;line-height:7px;color:#b06060">45</div>
<div class="t" style="left:1004.5px;top:602.30px;font-size:6.5px;line-height:6.5px;color:#80c080">0</div>
<div class="t" style="left:1004.5px;top:575.80px;font-size:6.5px;line-height:6.5px;color:#80c080">25</div>
<div class="t" style="left:1004.5px;top:549.30px;font-size:6.5px;line-height:6.5px;color:#80c080">50</div>
<div class="t" style="left:1004.5px;top:522.80px;font-size:6.5px;line-height:6.5px;color:#80c080">75</div>
<div class="t" style="left:1004.5px;top:496.30px;font-size:6.5px;line-height:6.5px;color:#80c080">100</div>
<div class="t" style="left:1004.5px;top:469.80px;font-size:6.5px;line-height:6.5px;color:#80c080">125</div>
<div class="t" style="left:693.40px;top:608.73px;width:30px;text-align:center;font-size:8px;line-height:8px;color:#707070">0.0</div>
<div class="t" style="left:744.80px;top:608.73px;width:30px;text-align:center;font-size:8px;line-height:8px;color:#707070">0.5</div>
<div class="t" style="left:796.20px;top:608.73px;width:30px;text-align:center;font-size:8px;line-height:8px;color:#707070">1.0</div>
<div class="t" style="left:847.60px;top:608.73px;width:30px;text-align:center;font-size:8px;line-height:8px;color:#707070">1.5</div>
<div class="t" style="left:899.00px;top:608.73px;width:30px;text-align:center;font-size:8px;line-height:8px;color:#707070">2.0</div>
<div class="t" style="left:950.40px;top:608.73px;width:30px;text-align:center;font-size:8px;line-height:8px;color:#707070">2.5</div>
<div class="t" style="left:806.00px;top:615.57px;width:80px;text-align:center;font-size:7px;line-height:7px;color:#707070">Time in minutes</div>
<div class="t" style="left:641.0px;top:522.0px;width:80px;height:8px;text-align:center;font-size:7px;line-height:8px;color:#900000;font-weight:bold;transform:rotate(-90deg);will-change:auto">Temperature [°C]</div>
<div class="t" style="left:977.0px;top:523.0px;width:80px;height:8px;text-align:center;font-size:8px;line-height:8px;color:#008000;font-weight:bold;transform:rotate(90deg);will-change:auto">Expansion [x10^-6]</div></body></html>
